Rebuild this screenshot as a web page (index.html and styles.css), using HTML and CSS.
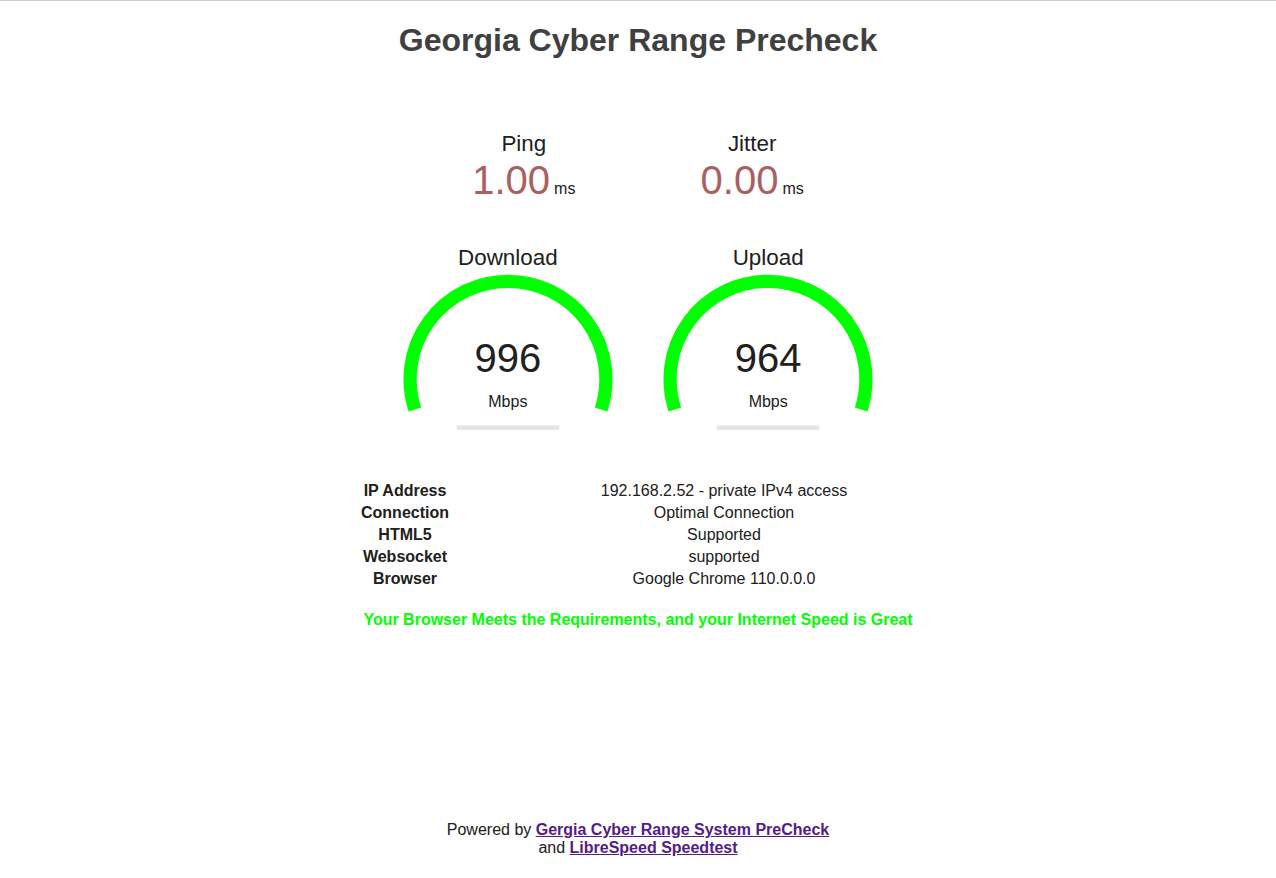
FILE: index.html
```html
<!DOCTYPE html>
<html>
<head>
<meta charset="utf-8">
<title>Georgia Cyber Range Precheck</title>
<link rel="stylesheet" href="styles.css">
</head>
<body>
<div class="topline"></div>
<h1 class="title">Georgia Cyber Range Precheck</h1>
<div class="test">
  <div class="group small"><div class="area2"><div class="name">Ping</div><div class="value ping">1.00</div><div class="unit2">ms</div></div><div class="area2"><div class="name">Jitter</div><div class="value ping">0.00</div><div class="unit2">ms</div></div></div>
  <div class="group"><div class="area"><div class="gname">Download</div><svg class="gauge" viewBox="0 0 256 200" width="256" height="200"><path d="M34.89 166.45 A97.9 97.9 0 1 1 221.11 166.45" fill="none" stroke="#00ff00" stroke-width="13.2"/><rect x="76.8" y="182.4" width="102.4" height="4.4" fill="#e4e4e4"/></svg><div class="gvalue">996</div><div class="gunit">Mbps</div></div><div class="area"><div class="gname">Upload</div><svg class="gauge" viewBox="0 0 256 200" width="256" height="200"><path d="M34.89 166.45 A97.9 97.9 0 1 1 221.11 166.45" fill="none" stroke="#00ff00" stroke-width="13.2"/><rect x="76.8" y="182.4" width="102.4" height="4.4" fill="#e4e4e4"/></svg><div class="gvalue">964</div><div class="gunit">Mbps</div></div></div>
</div>
<div class="info">
  <div class="label">IP Address</div><div class="val">192.168.2.52 - private IPv4 access</div>
  <div class="label">Connection</div><div class="val">Optimal Connection</div>
  <div class="label">HTML5</div><div class="val">Supported</div>
  <div class="label">Websocket</div><div class="val">supported</div>
  <div class="label">Browser</div><div class="val">Google Chrome 110.0.0.0</div>
</div>
<p class="result">Your Browser Meets the Requirements, and your Internet Speed is Great</p>
<div class="footer">Powered by <a href="#">Gergia Cyber Range System PreCheck</a><br>and <a href="#">LibreSpeed Speedtest</a></div>
</body>
</html>
```

FILE: styles.css
```css
html, body {
  margin: 0;
  padding: 0;
  background: #ffffff;
  color: #202020;
}
body {
  font-family: "Liberation Sans", Arial, sans-serif;
  font-size: 16px;
  text-align: center;
}
.topline {
  height: 1px;
  background: #cccccc;
}
.title {
  color: #404040;
  font-size: 32px;
  font-weight: bold;
  margin: 21px 0 0 0;
  line-height: 37px;
}
.test {
  margin-top: 72px;
}
.group {
  display: block;
  font-size: 0;
}
.area2 {
  display: inline-block;
  width: 224px;
  height: 112px;
  vertical-align: top;
  font-size: 16px;
  margin: 0 2.2px;
}
.name {
  font-size: 22.4px;
  line-height: 26px;
}
.value {
  display: inline-block;
  font-size: 40px;
  line-height: 46px;
}
.ping {
  color: #aa6060;
}
.unit2 {
  display: inline-block;
  margin-left: 4px;
}
.area {
  display: inline-block;
  position: relative;
  width: 256px;
  height: 200px;
  vertical-align: top;
  font-size: 16px;
  margin: 0 2.2px;
}
.gauge {
  display: block;
}
.gname {
  position: absolute;
  top: 2px;
  left: 0;
  width: 100%;
  font-size: 22.4px;
  line-height: 26px;
}
.gvalue {
  position: absolute;
  left: 0;
  width: 100%;
  bottom: 62px;
  font-size: 40px;
  line-height: 46px;
}
.gunit {
  position: absolute;
  left: 0;
  width: 100%;
  bottom: 32px;
  line-height: 18px;
}
.info {
  display: grid;
  grid-template-columns: 172px 466px;
  width: 638px;
  margin: 37px auto 0;
  line-height: 22px;
}
.label {
  font-weight: bold;
}
.result {
  color: #00ff00;
  font-weight: bold;
  margin: 19px 0 0;
  line-height: 22px;
}
.footer {
  margin-top: 190px;
  line-height: 18px;
}
.footer a {
  color: #551a8b;
  font-weight: bold;
}
```
